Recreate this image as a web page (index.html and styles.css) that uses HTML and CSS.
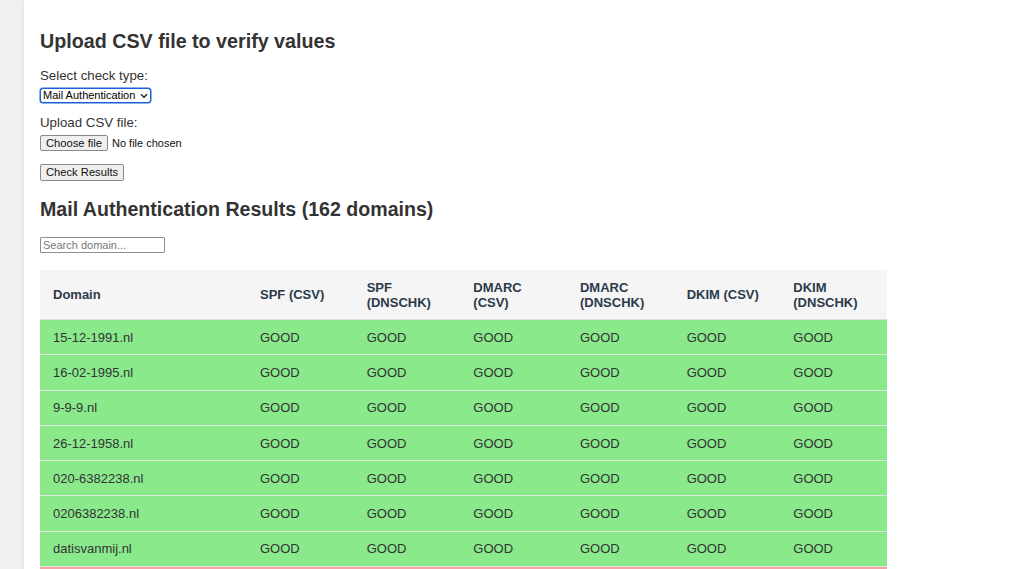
FILE: index.html
```html
<!DOCTYPE html>
<html lang="en">
<head>
<meta charset="utf-8">
<title>Upload CSV file to verify values</title>
<link rel="stylesheet" href="styles.css">
</head>
<body>
<main class="container">
  <h1 class="title">Upload CSV file to verify values</h1>
  <label class="label" for="checkType">Select check type:</label>
  <span class="select-wrap">
    <select id="checkType" class="select">
      <option>Mail Authentication</option>
    </select>
    <svg class="chev" width="8" height="6" viewBox="0 0 8 6"><path d="M1 1.2 L4 4.2 L7 1.2" fill="none" stroke="#222" stroke-width="1.4"/></svg>
  </span>
  <label class="label label-2">Upload CSV file:</label>
  <div class="file-row">
    <button class="btn" type="button">Choose file</button>
    <span class="file-name">No file chosen</span>
  </div>
  <button class="btn btn-check" type="button">Check Results</button>
  <h2 class="subtitle">Mail Authentication Results (162 domains)</h2>
  <input class="search" type="text" placeholder="Search domain...">
  <table class="results">
    <colgroup>
      <col class="col-domain">
      <col><col><col><col><col><col>
    </colgroup>
    <thead>
      <tr>
        <th>Domain</th>
        <th>SPF (CSV)</th>
        <th>SPF<br>(DNSCHK)</th>
        <th>DMARC<br>(CSV)</th>
        <th>DMARC<br>(DNSCHK)</th>
        <th>DKIM (CSV)</th>
        <th>DKIM<br>(DNSCHK)</th>
      </tr>
    </thead>
    <tbody>
      <tr class="good"><td>15-12-1991.nl</td><td>GOOD</td><td>GOOD</td><td>GOOD</td><td>GOOD</td><td>GOOD</td><td>GOOD</td></tr>
      <tr class="good"><td>16-02-1995.nl</td><td>GOOD</td><td>GOOD</td><td>GOOD</td><td>GOOD</td><td>GOOD</td><td>GOOD</td></tr>
      <tr class="good"><td>9-9-9.nl</td><td>GOOD</td><td>GOOD</td><td>GOOD</td><td>GOOD</td><td>GOOD</td><td>GOOD</td></tr>
      <tr class="good"><td>26-12-1958.nl</td><td>GOOD</td><td>GOOD</td><td>GOOD</td><td>GOOD</td><td>GOOD</td><td>GOOD</td></tr>
      <tr class="good"><td>020-6382238.nl</td><td>GOOD</td><td>GOOD</td><td>GOOD</td><td>GOOD</td><td>GOOD</td><td>GOOD</td></tr>
      <tr class="good"><td>0206382238.nl</td><td>GOOD</td><td>GOOD</td><td>GOOD</td><td>GOOD</td><td>GOOD</td><td>GOOD</td></tr>
      <tr class="good"><td>datisvanmij.nl</td><td>GOOD</td><td>GOOD</td><td>GOOD</td><td>GOOD</td><td>GOOD</td><td>GOOD</td></tr>
      <tr class="bad"><td>example-domain.nl</td><td>GOOD</td><td>BAD</td><td>GOOD</td><td>GOOD</td><td>GOOD</td><td>BAD</td></tr>
    </tbody>
  </table>
</main>
</body>
</html>
```
FILE: styles.css
```css
html, body {
  margin: 0;
  padding: 0;
}
body {
  background: #f1f1f1;
  font-family: "Liberation Sans", Arial, sans-serif;
  color: #333;
  overflow: hidden;
}
.container {
  margin-left: 24px;
  background: #fff;
  min-height: 100vh;
  padding: 30px 16px 40px;
  box-shadow: -2px 0 4px rgba(0,0,0,0.04);
  display: flex;
  flex-direction: column;
  align-items: flex-start;
}
.title {
  margin: 0;
  font-size: 19.7px;
  line-height: 23px;
  font-weight: bold;
  color: #333;
}
.label {
  display: block;
  margin-top: 15px;
  font-size: 13.3px;
  line-height: 16px;
  color: #333;
}
.label-2 {
  margin-top: 12px;
}
.select-wrap {
  position: relative;
  display: inline-block;
  margin-top: 4px;
}
.select {
  -webkit-appearance: none;
  appearance: none;
  display: block;
  width: 111px;
  height: 15px;
  box-sizing: border-box;
  margin: 0;
  padding: 0 0 0 2px;
  font-family: "Liberation Sans", Arial, sans-serif;
  font-size: 11px;
  line-height: 13px;
  color: #000;
  background: #fff;
  border: 1px solid #1a5fd6;
  border-radius: 3px;
  box-shadow: 0 0 0 0.5px #1a5fd6;
}
.chev {
  position: absolute;
  right: 3px;
  top: 5px;
}
.file-row {
  display: flex;
  align-items: center;
  margin-top: 4px;
  gap: 4px;
}
.btn {
  font-family: "Liberation Sans", Arial, sans-serif;
  font-size: 11.2px;
  line-height: 13px;
  height: 16px;
  padding: 0 5px;
  margin: 0;
  box-sizing: border-box;
  background: #efefef;
  color: #111;
  border: 1px solid #8a8a8a;
  border-radius: 2px;
}
.file-name {
  font-size: 11px;
  color: #111;
}
.btn-check {
  margin-top: 13px;
  height: 17px;
}
.subtitle {
  margin: 17px 0 0;
  font-size: 19.6px;
  line-height: 23px;
  font-weight: bold;
  color: #333;
}
.search {
  margin-top: 16px;
  width: 125px;
  height: 16px;
  box-sizing: border-box;
  padding: 0 2px;
  font-family: "Liberation Sans", Arial, sans-serif;
  font-size: 11px;
  border: 1px solid #8f8f8f;
  border-radius: 1px;
  color: #333;
}
.search::placeholder {
  color: #777;
}
.results {
  margin-top: 17px;
  width: 847px;
  table-layout: fixed;
  border-collapse: collapse;
}
.col-domain {
  width: 207px;
}
.results th {
  background: #f5f5f5;
  color: #2c3a4a;
  font-size: 13px;
  line-height: 15px;
  font-weight: bold;
  text-align: left;
  padding: 0 13px;
  height: 49px;
  border-bottom: 1px solid #dcdcdc;
}
.results td {
  font-size: 13px;
  line-height: 15px;
  color: #333;
  padding: 0 13px;
  height: 34.3px;
  border-bottom: 1px solid #dfe8df;
}
.good td {
  background: #89e98b;
}
.bad td {
  background: #f4a4a4;
}
```
